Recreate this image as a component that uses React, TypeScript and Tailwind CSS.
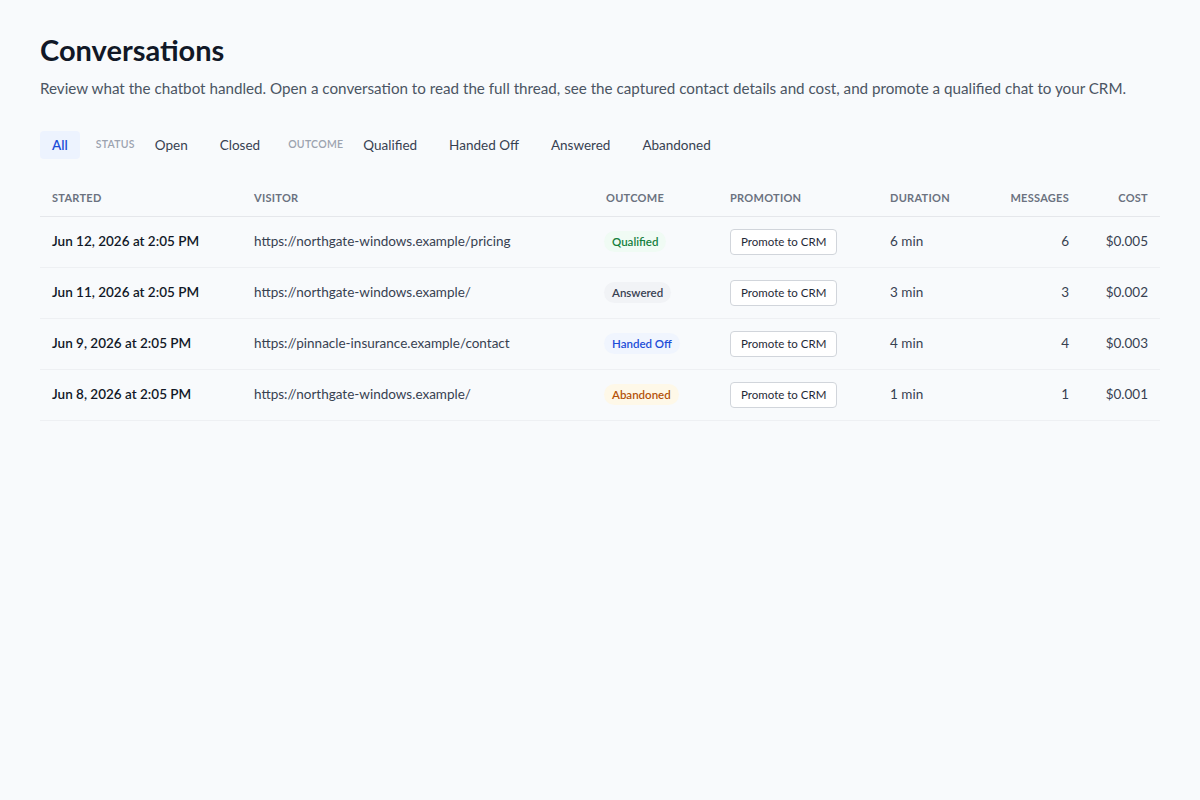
import React from 'react';

type Outcome = 'Qualified' | 'Answered' | 'Handed Off' | 'Abandoned';

interface Row {
  started: string;
  visitor: string;
  outcome: Outcome;
  duration: string;
  messages: number;
  cost: string;
}

const rows: Row[] = [
  { started: 'Jun 12, 2026 at 2:05 PM', visitor: 'https://northgate-windows.example/pricing', outcome: 'Qualified', duration: '6 min', messages: 6, cost: '$0.005' },
  { started: 'Jun 11, 2026 at 2:05 PM', visitor: 'https://northgate-windows.example/', outcome: 'Answered', duration: '3 min', messages: 3, cost: '$0.002' },
  { started: 'Jun 9, 2026 at 2:05 PM', visitor: 'https://pinnacle-insurance.example/contact', outcome: 'Handed Off', duration: '4 min', messages: 4, cost: '$0.003' },
  { started: 'Jun 8, 2026 at 2:05 PM', visitor: 'https://northgate-windows.example/', outcome: 'Abandoned', duration: '1 min', messages: 1, cost: '$0.001' },
];

const badgeStyles: Record<Outcome, string> = {
  Qualified: 'bg-[#f0fbf4] text-[#15803d]',
  Answered: 'bg-[#f1f3f6] text-[#374151]',
  'Handed Off': 'bg-[#f0f5fe] text-[#1d4ed8]',
  Abandoned: 'bg-[#fef8e8] text-[#b45309]',
};

function Tab({ label, active }: { label: string; active?: boolean }) {
  return (
    <button
      className={
        active
          ? 'px-3 py-1 leading-5 rounded bg-[#edf3fe] text-[#1d4ed8] text-[13.5px] font-semibold'
          : 'px-3 py-1 leading-5 rounded text-[#374151] text-[13.5px]'
      }
    >
      {label}
    </button>
  );
}

function GroupLabel({ children }: { children: React.ReactNode }) {
  return <span className="ml-2 text-[10.5px] font-semibold tracking-wide text-[#9ca3af] uppercase">{children}</span>;
}

export default function App() {
  return (
    <div
      className="min-h-screen bg-[#f8fafc] px-10 pt-8 text-[#1f2937]"
      style={{ fontFamily: 'Lato, "Noto Sans", sans-serif' }}
    >
      <h1 className="text-[29px] leading-9 font-bold text-[#111827]">Conversations</h1>
      <p className="mt-2 text-[15.2px] leading-6 text-[#4b5563]">
        Review what the chatbot handled. Open a conversation to read the full thread, see the captured contact details
        and cost, and promote a qualified chat to your CRM.
      </p>

      <div className="mt-[31px] flex items-center gap-2">
        <Tab label="All" active />
        <GroupLabel>Status</GroupLabel>
        <Tab label="Open" />
        <Tab label="Closed" />
        <GroupLabel>Outcome</GroupLabel>
        <Tab label="Qualified" />
        <Tab label="Handed Off" />
        <Tab label="Answered" />
        <Tab label="Abandoned" />
      </div>

      <table className="mt-[22px] w-[1120px] table-fixed border-collapse">
        <colgroup>
          <col className="w-[202px]" />
          <col className="w-[352px]" />
          <col className="w-[124px]" />
          <col className="w-[160px]" />
          <col className="w-[100px]" />
          <col className="w-[103px]" />
          <col className="w-[79px]" />
        </colgroup>
        <thead>
          <tr className="border-b border-[#e5e7eb] text-[11px] font-bold uppercase tracking-wide text-[#6b7280]">
            <th className="px-3 py-[9px] text-left font-bold">Started</th>
            <th className="px-3 py-[9px] text-left font-bold">Visitor</th>
            <th className="px-3 py-[9px] text-left font-bold">Outcome</th>
            <th className="px-3 py-[9px] text-left font-bold">Promotion</th>
            <th className="px-3 py-[9px] text-left font-bold">Duration</th>
            <th className="px-3 py-[9px] text-right font-bold">Messages</th>
            <th className="px-3 py-[9px] text-right font-bold">Cost</th>
          </tr>
        </thead>
        <tbody>
          {rows.map((r) => (
            <tr key={r.started} className="h-[51px] border-b border-[#eef0f3] text-[13.5px] text-[#374151]">
              <td className="px-3 font-semibold text-[#111827]">{r.started}</td>
              <td className="px-3">{r.visitor}</td>
              <td className="px-3">
                <span className={`-ml-0.5 inline-block rounded-full px-2 py-0.5 text-[11.5px] font-semibold ${badgeStyles[r.outcome]}`}>
                  {r.outcome}
                </span>
              </td>
              <td className="px-3">
                <button className="rounded border border-[#d1d5db] bg-white px-2.5 py-1 text-[11.5px] leading-4 text-[#1f2937]">
                  Promote to CRM
                </button>
              </td>
              <td className="px-3">{r.duration}</td>
              <td className="px-3 text-right">{r.messages}</td>
              <td className="px-3 text-right">{r.cost}</td>
            </tr>
          ))}
        </tbody>
      </table>
    </div>
  );
}
